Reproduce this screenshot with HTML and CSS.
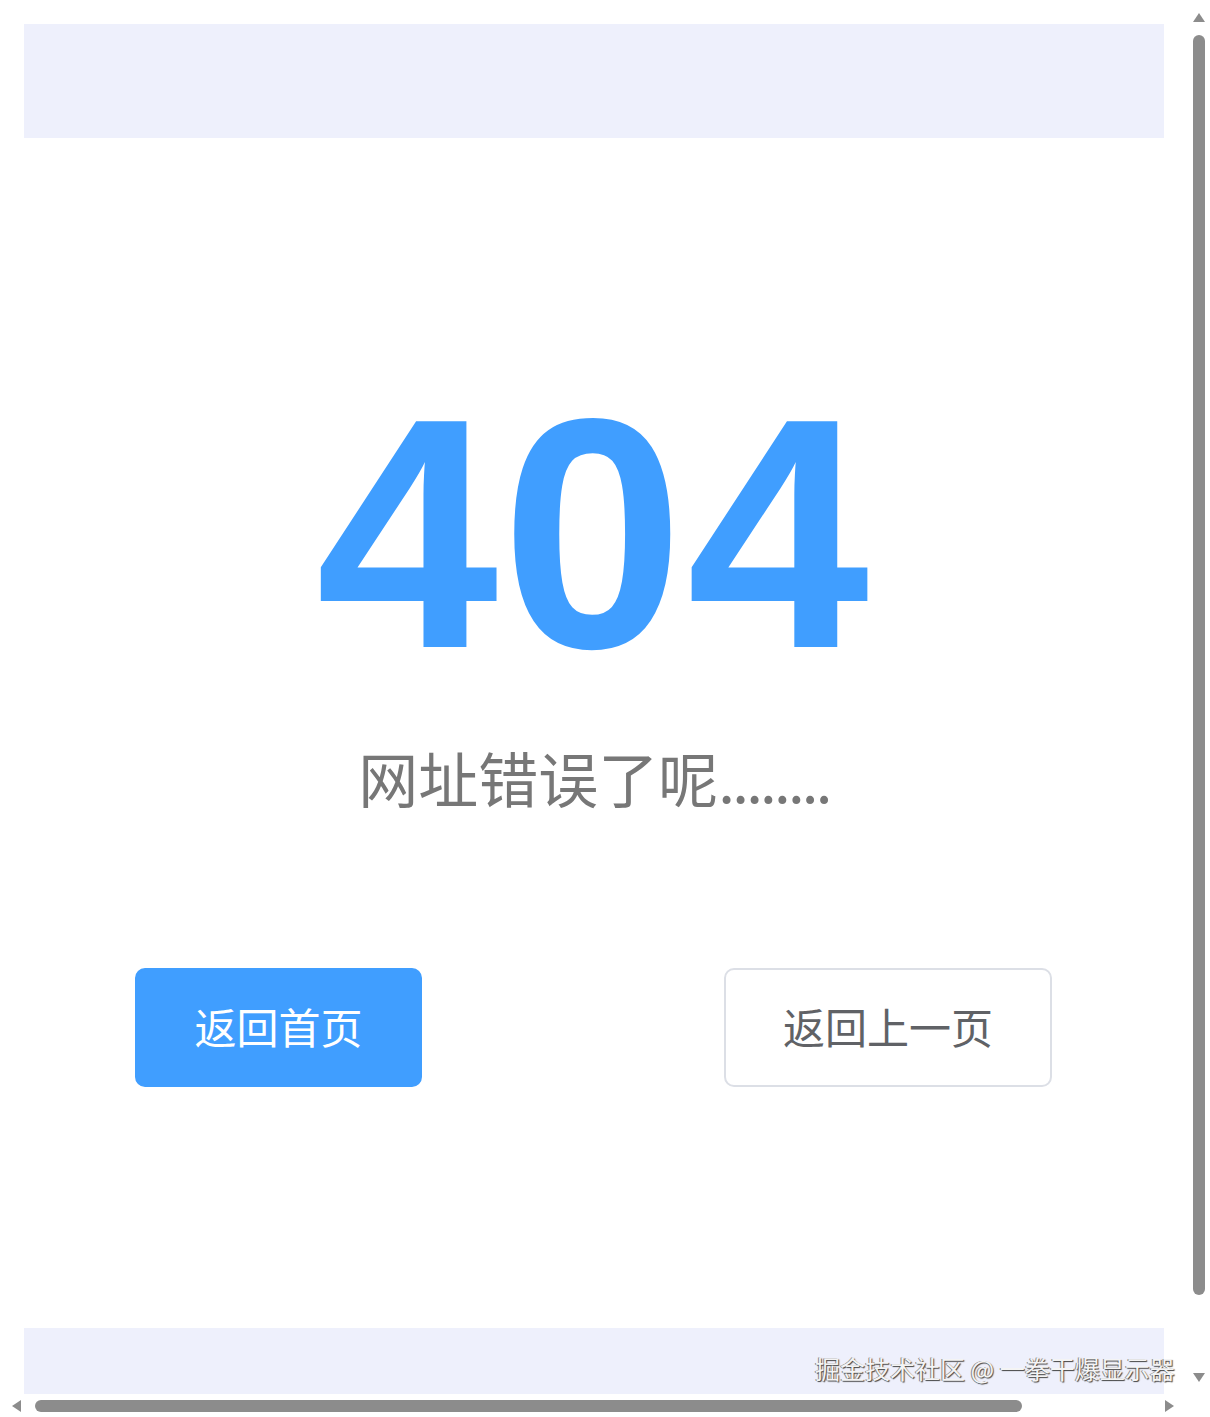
FILE: index.html
```html
<!DOCTYPE html>
<html lang="zh-CN">
<head>
<meta charset="utf-8">
<title>404</title>
<link rel="stylesheet" href="styles.css">
</head>
<body>
<div class="page">
  <div class="band header"></div>
  <div class="main">
    <div class="code">404</div>
    <div class="msg">网址错误了呢<span class="dots">........</span></div>
    <div class="actions">
      <button class="btn btn-primary">返回首页</button>
      <button class="btn btn-plain">返回上一页</button>
    </div>
  </div>
  <div class="band footer"></div>
</div>
<div class="watermark">掘金技术社区 @ 一拳干爆显示器</div>
<div class="vscroll">
  <div class="arrow arrow-up"></div>
  <div class="vthumb"></div>
  <div class="arrow arrow-down"></div>
</div>
<div class="hscroll">
  <div class="arrow arrow-left"></div>
  <div class="hthumb"></div>
  <div class="arrow arrow-right"></div>
</div>
</body>
</html>
```
FILE: styles.css
```css
html, body {
  margin: 0;
  padding: 0;
  background: #ffffff;
}
body {
  width: 1210px;
  height: 1417px;
  overflow: hidden;
  position: relative;
  font-family: "Liberation Sans", "Noto Sans CJK SC", sans-serif;
}
.page {
  width: 1140px;
  padding: 24px 24px 0 24px;
}
.band {
  background: #eef0fc;
}
.header {
  height: 114px;
}
.footer {
  height: 66px;
}
.main {
  height: 1190px;
  display: flex;
  flex-direction: column;
  align-items: center;
}
.code {
  margin-top: 232px;
  font-size: 328px;
  line-height: 328px;
  height: 328px;
  font-weight: bold;
  color: #409eff;
  letter-spacing: 3px;
}
.msg {
  margin-top: 49px;
  font-size: 60px;
  line-height: 60px;
  height: 60px;
  color: #777777;
  font-family: "Noto Sans CJK SC", sans-serif;
  white-space: nowrap;
}
.dots {
  letter-spacing: -2.75px;
}
.actions {
  margin-top: 161px;
  width: 100%;
  box-sizing: border-box;
  padding: 0 112px 0 111px;
  display: flex;
  justify-content: space-between;
}
.btn {
  height: 119px;
  box-sizing: border-box;
  padding: 0 58px 4px 58px;
  border-radius: 10px;
  font-size: 42px;
  line-height: 42px;
  font-family: "Noto Sans CJK SC", sans-serif;
  white-space: nowrap;
  display: flex;
  align-items: center;
  justify-content: center;
  cursor: pointer;
}
.btn-primary {
  width: 287px;
  background: #409eff;
  border: 2px solid #409eff;
  color: #ffffff;
}
.btn-plain {
  width: 328px;
  background: #ffffff;
  border: 2px solid #dcdfe6;
  color: #606266;
}
.watermark {
  position: absolute;
  left: 815px;
  top: 1350px;
  font-size: 25px;
  line-height: 36px;
  color: #f4f4f4;
  font-family: "Noto Sans CJK SC", sans-serif;
  text-shadow: 1px 1px 1px #444, -1px 0 0 #888;
  white-space: nowrap;
}
.vscroll {
  position: absolute;
  right: 0;
  top: 0;
  width: 22px;
  height: 1394px;
}
.vthumb {
  position: absolute;
  left: 5px;
  top: 35px;
  width: 12px;
  height: 1260px;
  border-radius: 6px;
  background: #8c8c8c;
}
.hscroll {
  position: absolute;
  left: 0;
  bottom: 0;
  width: 1188px;
  height: 23px;
}
.hthumb {
  position: absolute;
  left: 35px;
  top: 6px;
  width: 987px;
  height: 12px;
  border-radius: 6px;
  background: #8c8c8c;
}
.arrow {
  position: absolute;
  width: 0;
  height: 0;
  border-style: solid;
  border-color: transparent;
}
.arrow-up {
  left: 5px;
  top: 13px;
  border-width: 0 6px 9px 6px;
  border-bottom-color: #8c8c8c;
}
.arrow-down {
  left: 5px;
  top: 1373px;
  border-width: 9px 6px 0 6px;
  border-top-color: #8c8c8c;
}
.arrow-left {
  left: 12px;
  top: 6px;
  border-width: 6px 9px 6px 0;
  border-right-color: #8c8c8c;
}
.arrow-right {
  left: 1165px;
  top: 6px;
  border-width: 6px 0 6px 9px;
  border-left-color: #8c8c8c;
}
```
